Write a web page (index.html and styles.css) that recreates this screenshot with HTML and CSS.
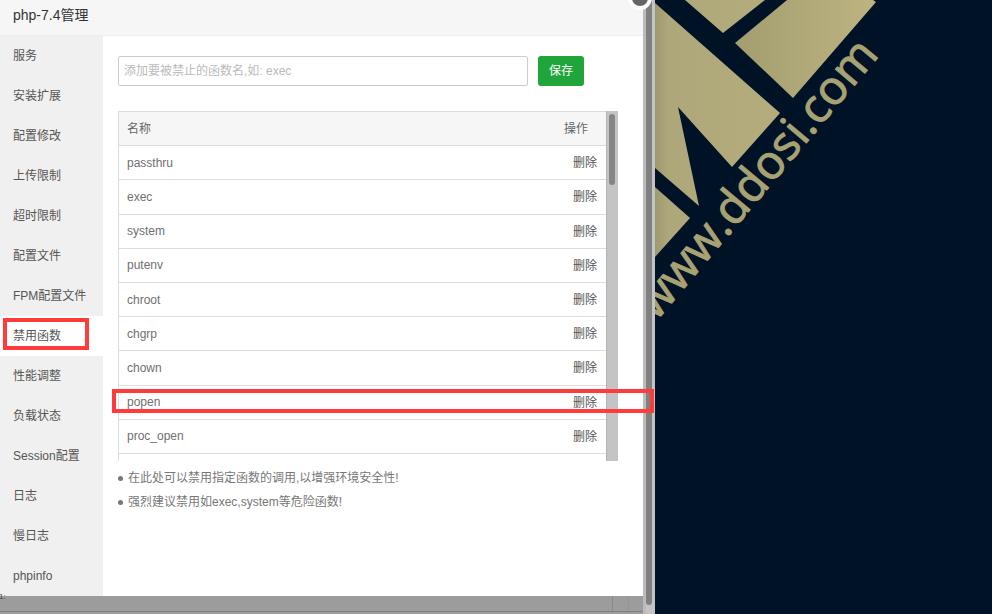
FILE: index.html
```html
<!DOCTYPE html>
<html lang="zh-CN">
<head>
    <meta charset="UTF-8">
    <title>php-7.4管理</title>
    <link rel="stylesheet" href="styles.css">
</head>
<body>
    <div class="screen">
        <div class="left-side">
            <div class="dialog">
                <div class="dialog-title">php-7.4管理</div>
                <div class="dialog-body">
                    <ul class="side-menu">
                        <li>服务</li>
                        <li>安装扩展</li>
                        <li>配置修改</li>
                        <li>上传限制</li>
                        <li>超时限制</li>
                        <li>配置文件</li>
                        <li>FPM配置文件</li>
                        <li class="active">禁用函数</li>
                        <li>性能调整</li>
                        <li>负载状态</li>
                        <li>Session配置</li>
                        <li>日志</li>
                        <li>慢日志</li>
                        <li>phpinfo</li>
                    </ul>
                    <div class="main">
                        <div class="add-row">
                            <input class="add-input" type="text" placeholder="添加要被禁止的函数名,如: exec">
                            <button class="save-btn">保存</button>
                        </div>
                        <div class="table-box">
                            <div class="table-scroll">
                                <table>
                                    <thead>
                                        <tr><th>名称</th><th class="op">操作</th></tr>
                                    </thead>
                                    <tbody>
                                        <tr><td>passthru</td><td class="op">删除</td></tr>
                                        <tr><td>exec</td><td class="op">删除</td></tr>
                                        <tr><td>system</td><td class="op">删除</td></tr>
                                        <tr><td>putenv</td><td class="op">删除</td></tr>
                                        <tr><td>chroot</td><td class="op">删除</td></tr>
                                        <tr><td>chgrp</td><td class="op">删除</td></tr>
                                        <tr><td>chown</td><td class="op">删除</td></tr>
                                        <tr><td>popen</td><td class="op">删除</td></tr>
                                        <tr><td>proc_open</td><td class="op">删除</td></tr>
                                    </tbody>
                                </table>
                            </div>
                            <div class="scroll-track"><div class="scroll-thumb"></div></div>
                        </div>
                        <ul class="notes">
                            <li>在此处可以禁用指定函数的调用,以增强环境安全性!</li>
                            <li>强烈建议禁用如exec,system等危险函数!</li>
                        </ul>
                    </div>
                </div>
                <span class="close-btn"></span>
            </div>
            <div class="page-behind"><span class="behind-text">1:</span></div>
        </div>
        <div class="page-scroll"><div class="page-thumb"></div></div>
        <div class="art">
            <svg class="art-svg" viewBox="655 0 337 614" width="337" height="614">
                <defs>
                    <linearGradient id="gold" x1="0" y1="0" x2="1" y2="0">
                        <stop offset="0" stop-color="#a39d70"></stop>
                        <stop offset="1" stop-color="#bdb480"></stop>
                    </linearGradient>
                    <linearGradient id="gold-left" gradientUnits="userSpaceOnUse" x1="655" y1="0" x2="790" y2="0">
                        <stop offset="0" stop-color="#9e9970"></stop>
                        <stop offset="0.1" stop-color="#aea77a"></stop>
                        <stop offset="1" stop-color="#b5ad7c"></stop>
                    </linearGradient>
                </defs>
                <polygon fill="url(#gold-left)" points="655,3 780,113 732,167 678,107 699,206 655,168"></polygon>
                <polygon fill="url(#gold-left)" points="685,0 723,33 765,0"></polygon>
                <polygon fill="url(#gold)" points="787,0 735,43 793,98 876,2 873,0"></polygon>
                <polygon fill="url(#gold-left)" points="655,187 690,218 655,257"></polygon>
                <text class="art-text" transform="translate(656,322) rotate(-50)">www.ddosi.com</text>
            </svg>
        </div>
        <div class="mark mark-menu"></div>
        <div class="mark mark-row"></div>
    </div>
</body>
</html>
```

FILE: styles.css
```css
* {
    box-sizing: border-box;
}

body {
    margin: 0;
    font-family: "Liberation Sans", "Noto Sans CJK SC", sans-serif;
    font-size: 12px;
    color: #555;
}

ul {
    margin: 0;
    padding: 0;
    list-style: none;
}

.screen {
    position: relative;
    display: flex;
    width: 992px;
    height: 614px;
    overflow: hidden;
    background-color: #001226;
}

.left-side {
    width: 643px;
    display: flex;
    flex-direction: column;
}

.dialog {
    position: relative;
    height: 596px;
    background-color: #fff;
}

.dialog-title {
    height: 36px;
    padding-left: 13px;
    line-height: 30px;
    font-size: 14px;
    color: #333;
    background-color: #f6f6f6;
    border-bottom: 1px solid #eee;
}

.dialog-body {
    display: flex;
    height: 560px;
}

.side-menu {
    width: 103px;
    background-color: #f0f0f0;
}

.side-menu li {
    height: 40px;
    padding-left: 13px;
    line-height: 41px;
    color: #555;
}

.side-menu li.active {
    background-color: #fff;
}

.close-btn {
    position: absolute;
    top: -14px;
    right: -9px;
    width: 24px;
    height: 24px;
    border: 4px solid #fff;
    border-radius: 50%;
    background-color: #666;
}

.main {
    flex: 1;
    padding: 20px 25px 0 15px;
}

.add-row {
    display: flex;
    gap: 10px;
    margin-bottom: 25px;
}

.add-input {
    width: 410px;
    height: 30px;
    padding: 0 5px;
    border: 1px solid #ccc;
    border-radius: 2px;
    font-family: inherit;
    font-size: 12px;
    color: #555;
}

.add-input::placeholder {
    color: #bbb;
}

.save-btn {
    width: 46px;
    height: 30px;
    padding: 0 0 3px;
    border: none;
    border-radius: 3px;
    font-family: inherit;
    font-size: 12px;
    color: #fff;
    background-color: #20a53a;
}

.table-box {
    display: flex;
    width: 500px;
    height: 350px;
}

.table-scroll {
    flex: 1;
    overflow: hidden;
    border-left: 1px solid #ddd;
}

table {
    width: 100%;
    border-collapse: collapse;
}

th, td {
    height: 34.2px;
    padding: 0 8px;
    text-align: left;
    font-weight: normal;
    color: #707070;
    border-bottom: 1px solid #ddd;
}

th {
    padding-bottom: 2px;
    color: #666;
    background-color: #f6f6f6;
    border-top: 1px solid #ddd;
}

td.op {
    padding-right: 9px;
    padding-bottom: 2px;
    text-align: right;
    color: #555;
}

th.op {
    text-align: right;
    padding-right: 18px;
}

.scroll-track {
    width: 12px;
    padding: 3px 0 0 2px;
    background-color: #c4c4c4;
    border-left: 1px solid #b4b4b4;
}

.scroll-thumb {
    width: 6px;
    height: 71px;
    border-radius: 3px;
    background-color: #858585;
}

.notes {
    margin-top: 5px;
}

.notes li {
    position: relative;
    padding-left: 10px;
    line-height: 24px;
    color: #777;
}

.notes li::before {
    content: "";
    position: absolute;
    left: 0;
    top: 10px;
    width: 5px;
    height: 5px;
    border-radius: 50%;
    background-color: #777;
}

.page-behind {
    position: relative;
    flex: 1;
    background-color: #9c9c9c;
    background-image:
        linear-gradient(90deg, transparent 612px, #8a8a8a 612px, #8a8a8a 613px, transparent 613px),
        linear-gradient(90deg, transparent 628px, #959595 628px, #959595 629px, transparent 629px);
    border-bottom: 2px solid #9c9c9c;
    box-shadow: inset 0 -3px 0 -2px #808080;
}

.behind-text {
    position: absolute;
    left: -1px;
    top: -4px;
    font-size: 8px;
    color: #444;
}

.page-scroll {
    width: 12px;
    padding-left: 3px;
    background-image: linear-gradient(90deg, #bbb 3px, #c4c4c4 3px);
}

.page-thumb {
    width: 6px;
    height: 605px;
    border-radius: 0 0 3px 3px;
    background-color: #808080;
}

.art {
    flex: 1;
}

.art-svg {
    display: block;
}

.art-text {
    font-family: "Open Sans", sans-serif;
    font-size: 47px;
    fill: #a8a273;
    stroke: #a8a273;
    stroke-width: 1px;
}

.mark {
    position: absolute;
    border: 4px solid #ff3b3b;
}

.mark-menu {
    left: 3px;
    top: 318px;
    width: 86px;
    height: 32px;
}

.mark-row {
    left: 112px;
    top: 389px;
    width: 542px;
    height: 24px;
}
```
